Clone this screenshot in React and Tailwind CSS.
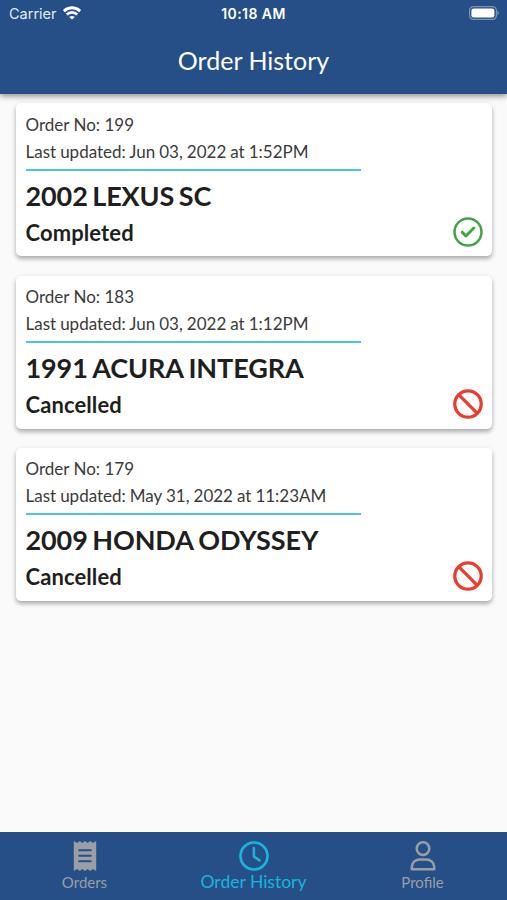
import React, { useState } from "react";

const orders = [
  { id: 199, updated: "Jun 03, 2022 at 1:52PM", vehicle: "2002 LEXUS SC", status: "Completed" },
  { id: 183, updated: "Jun 03, 2022 at 1:12PM", vehicle: "1991 ACURA INTEGRA", status: "Cancelled" },
  { id: 179, updated: "May 31, 2022 at 11:23AM", vehicle: "2009 HONDA ODYSSEY", status: "Cancelled" },
];

const WifiIcon = () => (
  <svg width="18" height="14" viewBox="0 0 18 14" fill="none" stroke="currentColor" strokeWidth="2.8">
    <path d="M0.9 5.2C5.4 0.6 12.6 0.6 17.1 5.2" />
    <path d="M3.8 8.5C6.7 5.6 11.3 5.6 14.2 8.5" />
    <path d="M9 13.6L6.2 11C7.8 9.5 10.2 9.5 11.8 11Z" fill="currentColor" stroke="none" />
  </svg>
);

const BatteryIcon = () => (
  <svg width="30" height="14" viewBox="0 0 30 14">
    <rect x="0.6" y="0.6" width="26.8" height="12.8" rx="4" fill="none" stroke="#fff" strokeOpacity="0.4" strokeWidth="1.2" />
    <rect x="2.4" y="2.4" width="23" height="9.2" rx="2.3" fill="#fff" />
    <path d="M28.5 4.8C30 5.5 30 8.5 28.5 9.2Z" fill="#fff" fillOpacity="0.5" />
  </svg>
);

const CheckIcon = () => (
  <svg width="30" height="30" viewBox="0 0 30 30" fill="none" stroke="#43a548">
    <circle cx="15" cy="15" r="13.5" strokeWidth="2.5" />
    <path d="M9.2 15.2L12.9 19L20.8 11" strokeWidth="3" strokeLinecap="round" strokeLinejoin="round" />
  </svg>
);

const BanIcon = () => (
  <svg width="30" height="30" viewBox="0 0 30 30" fill="none" stroke="#ea3d2f" strokeWidth="3.3">
    <circle cx="15" cy="15" r="13.2" />
    <path d="M5.7 5.7L24.3 24.3" />
  </svg>
);

const ReceiptIcon = () => (
  <svg width="32" height="32" viewBox="0 0 32 32">
    <path d="M4.8 1L8 3L10.8 1L13.4 3L16 1L18.6 3L21.2 1L24 3L27.2 1V31L24 29L21.2 31L18.6 29L16 31L13.4 29L10.8 31L8 29L4.8 31Z" fill="currentColor" />
    <path d="M10.2 10.3H21.8M10.2 15.8H21.8M10.2 21.3H21.8" stroke="#254f86" strokeWidth="2" strokeLinecap="round" />
  </svg>
);

const ClockIcon = () => (
  <svg width="32" height="32" viewBox="0 0 32 32" fill="none" stroke="currentColor" strokeWidth="2.7">
    <circle cx="16" cy="16" r="13.5" />
    <path d="M15.9 8V16.6L21.6 20.4" strokeWidth="2.5" strokeLinecap="round" strokeLinejoin="round" />
  </svg>
);

const PersonIcon = () => (
  <svg width="32" height="32" viewBox="0 0 32 32" fill="none" stroke="currentColor" strokeWidth="2.5">
    <circle cx="16" cy="8.6" r="6.3" />
    <path d="M4.8 29.2V27C4.8 22.2 8.8 19.4 13 19.4H19C23.2 19.4 27.2 22.2 27.2 27V29.2Z" strokeLinejoin="round" />
  </svg>
);

const tabs = [
  { name: "Orders", icon: ReceiptIcon },
  { name: "Order History", icon: ClockIcon },
  { name: "Profile", icon: PersonIcon },
];

const OrderCard = ({ order }) => (
  <div className="flex h-[153px] items-end justify-between rounded-[5px] bg-white pl-[9.5px] pr-[9.5px] shadow-[0_3px_4px_rgba(0,0,0,0.27),0_1px_6px_rgba(0,0,0,0.08)]">
    <div className="h-full w-[335px] pt-[7.5px] text-[#1f1f1f]">
      <p className="text-[17px] leading-[27px] text-[#3b3b3b]">Order No: {order.id}</p>
      <p className="whitespace-nowrap text-[17px] leading-[27px] text-[#3b3b3b] [word-spacing:-0.35px]">Last updated: {order.updated}</p>
      <div className="mt-[4px] h-[2px] bg-[#4cc5dc]"></div>
      <h2 className="mt-[6px] flex gap-[4.5px] text-[27px] font-bold leading-[38px] tracking-[-0.1px]">
        {order.vehicle.split(" ").map((word) => (
          <span key={word}>{word}</span>
        ))}
      </h2>
      <p className="pt-px text-[22px] font-bold leading-[34px] tracking-[0.1px]">{order.status}</p>
    </div>
    <div className="mb-[9.5px]">
      {order.status === "Completed" ? <CheckIcon /> : <BanIcon />}
    </div>
  </div>
);

const App = () => {
  const [selectedTab, setSelectedTab] = useState("Order History");

  return (
    <div className="flex h-[900px] w-[507px] flex-col overflow-hidden bg-[#fafafa] font-['Lato',sans-serif]">
      <header className="z-10 h-[94px] shrink-0 bg-[#254f86] text-white shadow-[0_2px_6px_rgba(0,0,0,0.45)]">
        <div className="grid h-[27px] grid-cols-3 items-center px-[9px] font-['Inter',sans-serif] text-[14px]">
          <div className="flex items-center gap-[6px] text-[#e3eaf3]">
            <span className="pt-px text-[14.5px]">Carrier</span>
            <span className="-mt-px text-white"><WifiIcon /></span>
          </div>
          <p className="text-center font-semibold tracking-[0.45px]">10:18 AM</p>
          <div className="-mr-[1px] -mt-px flex justify-end"><BatteryIcon /></div>
        </div>
        <h1 className="text-center text-[25px] leading-[67px]">Order History</h1>
      </header>

      <main className="flex flex-1 flex-col gap-[19.3px] pl-[16px] pr-[15px] pt-[9.3px]">
        {orders.map((order) => (
          <OrderCard key={order.id} order={order} />
        ))}
      </main>

      <nav className="grid h-[68.5px] shrink-0 grid-cols-3 bg-[#254f86]">
        {tabs.map(({ name, icon: Icon }) => (
          <button
            key={name}
            onClick={() => setSelectedTab(name)}
            className={selectedTab === name ? "flex flex-col items-center pt-[8.5px] text-[17.5px] text-[#19b5dc]" : "flex flex-col items-center pt-[8.5px] text-[15px] text-[#9a9fa6]"}
          >
            <Icon />
            <span className="leading-[20px]">{name}</span>
          </button>
        ))}
      </nav>
    </div>
  );
};

export default App;
